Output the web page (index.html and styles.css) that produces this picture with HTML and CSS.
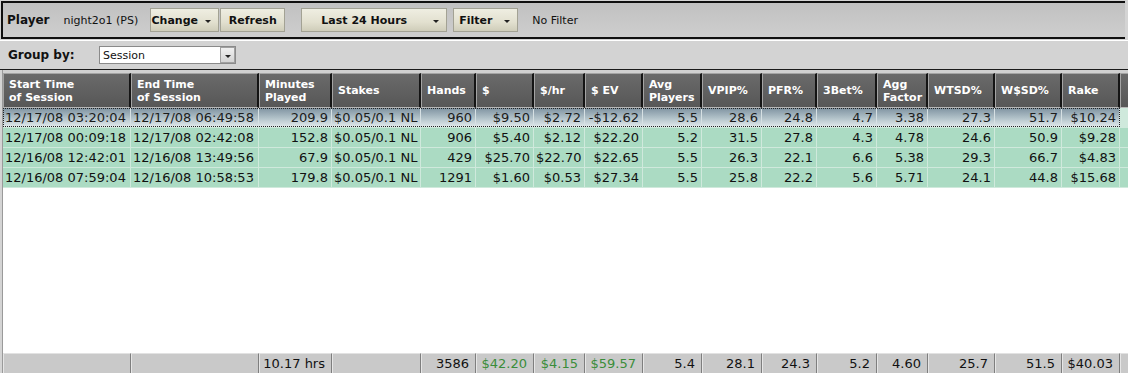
FILE: index.html
```html
<!DOCTYPE html>
<html lang="en">

<head>
    <meta charset="UTF-8" />
    <meta name="viewport" content="width=device-width, initial-scale=1.0" />
    <title>Session Stats</title>
    <link rel="stylesheet" href="styles.css">
</head>

<body>
    <div class="toolbar">
        <span class="player-label">Player</span>
        <span class="player-name">night2o1 (PS)</span>
        <button class="btn btn-change"><span class="btn-label">Change</span><span class="caret-box"><span class="caret"></span></span></button>
        <button class="btn btn-refresh"><span class="btn-label">Refresh</span></button>
        <button class="btn btn-range"><span class="btn-label">Last 24 Hours</span><span class="caret-box"><span class="caret"></span></span></button>
        <button class="btn btn-filter"><span class="btn-label">Filter</span><span class="caret-box"><span class="caret"></span></span></button>
        <span class="filter-text">No Filter</span>
    </div>

    <div class="groupbar">
        <span class="group-label">Group by:</span>
        <div class="select">
            <span class="select-value">Session</span>
            <span class="select-arrow"><span class="caret"></span></span>
        </div>
    </div>

    <div class="grid">
        <div class="grid-head">
            <div class="row">
                <div class="cell">Start Time<br>of Session</div>
                <div class="cell">End Time<br>of Session</div>
                <div class="cell">Minutes<br>Played</div>
                <div class="cell">Stakes</div>
                <div class="cell">Hands</div>
                <div class="cell">$</div>
                <div class="cell">$/hr</div>
                <div class="cell">$ EV</div>
                <div class="cell">Avg<br>Players</div>
                <div class="cell">VPIP%</div>
                <div class="cell">PFR%</div>
                <div class="cell">3Bet%</div>
                <div class="cell">Agg<br>Factor</div>
                <div class="cell">WTSD%</div>
                <div class="cell">W$SD%</div>
                <div class="cell">Rake</div>
                <div class="cell"></div>
            </div>
        </div>

        <div class="grid-body">
            <div class="row selected">
                <div class="cell">12/17/08 03:20:04</div>
                <div class="cell">12/17/08 06:49:58</div>
                <div class="cell num">209.9</div>
                <div class="cell">$0.05/0.1 NL</div>
                <div class="cell num">960</div>
                <div class="cell num">$9.50</div>
                <div class="cell num">$2.72</div>
                <div class="cell num">-$12.62</div>
                <div class="cell num">5.5</div>
                <div class="cell num">28.6</div>
                <div class="cell num">24.8</div>
                <div class="cell num">4.7</div>
                <div class="cell num">3.38</div>
                <div class="cell num">27.3</div>
                <div class="cell num">51.7</div>
                <div class="cell num">$10.24</div>
                <div class="cell extra"></div>
            </div>
            <div class="row">
                <div class="cell">12/17/08 00:09:18</div>
                <div class="cell">12/17/08 02:42:08</div>
                <div class="cell num">152.8</div>
                <div class="cell">$0.05/0.1 NL</div>
                <div class="cell num">906</div>
                <div class="cell num">$5.40</div>
                <div class="cell num">$2.12</div>
                <div class="cell num">$22.20</div>
                <div class="cell num">5.2</div>
                <div class="cell num">31.5</div>
                <div class="cell num">27.8</div>
                <div class="cell num">4.3</div>
                <div class="cell num">4.78</div>
                <div class="cell num">24.6</div>
                <div class="cell num">50.9</div>
                <div class="cell num">$9.28</div>
                <div class="cell extra"></div>
            </div>
            <div class="row">
                <div class="cell">12/16/08 12:42:01</div>
                <div class="cell">12/16/08 13:49:56</div>
                <div class="cell num">67.9</div>
                <div class="cell">$0.05/0.1 NL</div>
                <div class="cell num">429</div>
                <div class="cell num">$25.70</div>
                <div class="cell num">$22.70</div>
                <div class="cell num">$22.65</div>
                <div class="cell num">5.5</div>
                <div class="cell num">26.3</div>
                <div class="cell num">22.1</div>
                <div class="cell num">6.6</div>
                <div class="cell num">5.38</div>
                <div class="cell num">29.3</div>
                <div class="cell num">66.7</div>
                <div class="cell num">$4.83</div>
                <div class="cell extra"></div>
            </div>
            <div class="row">
                <div class="cell">12/16/08 07:59:04</div>
                <div class="cell">12/16/08 10:58:53</div>
                <div class="cell num">179.8</div>
                <div class="cell">$0.05/0.1 NL</div>
                <div class="cell num">1291</div>
                <div class="cell num">$1.60</div>
                <div class="cell num">$0.53</div>
                <div class="cell num">$27.34</div>
                <div class="cell num">5.5</div>
                <div class="cell num">25.8</div>
                <div class="cell num">22.2</div>
                <div class="cell num">5.6</div>
                <div class="cell num">5.71</div>
                <div class="cell num">24.1</div>
                <div class="cell num">44.8</div>
                <div class="cell num">$15.68</div>
                <div class="cell extra"></div>
            </div>
        </div>

        <div class="grid-foot">
            <div class="row">
                <div class="cell"></div>
                <div class="cell"></div>
                <div class="cell num">10.17 hrs</div>
                <div class="cell"></div>
                <div class="cell num">3586</div>
                <div class="cell num money">$42.20</div>
                <div class="cell num money">$4.15</div>
                <div class="cell num money">$59.57</div>
                <div class="cell num">5.4</div>
                <div class="cell num">28.1</div>
                <div class="cell num">24.3</div>
                <div class="cell num">5.2</div>
                <div class="cell num">4.60</div>
                <div class="cell num">25.7</div>
                <div class="cell num">51.5</div>
                <div class="cell num">$40.03</div>
                <div class="cell"></div>
            </div>
        </div>
    </div>
</body>

</html>
```

FILE: styles.css
```css
body {
    margin: 0;
    font-family: "DejaVu Sans", Verdana, sans-serif;
    background-color: #d4d4d4;
    color: #111;
    width: 1128px;
    height: 373px;
    overflow: hidden;
}

/* top toolbar */
.toolbar {
    display: flex;
    align-items: center;
    box-sizing: border-box;
    height: 38px;
    margin: 1px 3px 0 1px;
    padding-left: 4px;
    border: 2px solid #101010;
    border-right: none;
    background: linear-gradient(#c1c1c1, #cecece);
}

.player-label {
    font-size: 12px;
    font-weight: bold;
}

.player-name {
    font-size: 11px;
    margin-left: 14px;
}

.btn {
    display: flex;
    align-items: center;
    box-sizing: border-box;
    height: 24px;
    padding: 0;
    border: 1px solid #a3a294;
    background: linear-gradient(#efeee2, #e2e0cf 60%, #cfcdb9);
    font-family: inherit;
    font-size: 11px;
    font-weight: bold;
    color: #111;
}

.btn-label {
    flex: 1;
    text-align: center;
}

.caret-box {
    width: 20px;
    display: flex;
    justify-content: center;
}

.caret {
    width: 0;
    height: 0;
    border-left: 3px solid transparent;
    border-right: 3px solid transparent;
    border-top: 3px solid #222;
    margin-top: 2px;
}

.btn-change {
    width: 69px;
    margin-left: 12px;
}

.btn-refresh {
    width: 65px;
    margin-left: 1px;
}

.btn-range {
    width: 146px;
    margin-left: 16px;
}

.btn-filter {
    width: 65px;
    margin-left: 6px;
}

.filter-text {
    font-size: 11px;
    margin-left: 14px;
}

/* group by bar */
.groupbar {
    display: flex;
    align-items: center;
    box-sizing: border-box;
    height: 30px;
    margin-top: 1px;
    padding-left: 8px;
    border-top: 1px solid #fff;
    border-bottom: 1px solid #1a1a1a;
    background-color: #d3d3d3;
}

.group-label {
    width: 91px;
    font-size: 12px;
    font-weight: bold;
}

.select {
    display: flex;
    align-items: center;
    box-sizing: border-box;
    width: 137px;
    height: 18px;
    border: 1px solid #8a8a8a;
    background-color: #fff;
}

.select-value {
    flex: 1;
    font-size: 11px;
    padding-left: 3px;
}

.select-arrow {
    display: flex;
    align-items: center;
    justify-content: center;
    box-sizing: border-box;
    width: 15px;
    height: 16px;
    border: 1px solid #a0a0a0;
    background: linear-gradient(#f0f0f0, #d4d4d4);
}

/* data grid */
.grid {
    display: flex;
    flex-direction: column;
    height: 303px;
    margin-left: 2px;
    border-left: 1px solid #9a9a9a;
    overflow: hidden;
}

.row {
    display: grid;
    grid-template-columns: 128px 128px 73px 89px 55px 58px 51px 58px 59px 60px 55px 60px 51px 67px 67px 58px 60px;
}

.cell {
    box-sizing: border-box;
    white-space: nowrap;
    overflow: hidden;
}

.grid-head {
    padding-top: 3px;
    background-color: #d0d0d0;
}

.grid-head .cell {
    display: flex;
    align-items: center;
    height: 35px;
    padding: 0 5px;
    border-top: 1px solid #a4a4a4;
    border-left: 1px solid #a4a4a4;
    border-right: 2px solid #141414;
    border-bottom: 1px solid #b8b8b8;
    background: linear-gradient(#6a6a6a, #575757);
    color: #fff;
    font-size: 11px;
    font-weight: bold;
    line-height: 13px;
}

.grid-body {
    flex: 1;
    background-color: #fff;
}

.grid-body .row {
    height: 20px;
}

.grid-body .cell {
    height: 20px;
    padding: 0 3px 0 2px;
    border-right: 1px solid #cfe9dc;
    border-bottom: 1px solid #cfe9dc;
    background-color: #abdbc3;
    font-size: 13px;
    line-height: 19px;
}

.num {
    text-align: right;
}

.row.selected {
    position: relative;
}

.row.selected .cell {
    background: linear-gradient(#7f93a1, #b3c3ca 55%, #e2eaec);
    border-right-color: #d6e0e3;
    color: #1c1c1c;
}

.row.selected .cell.extra {
    background: #cfe9dc;
}

.row.selected::after {
    content: "";
    position: absolute;
    left: 0;
    top: 0;
    width: 1117px;
    height: 19px;
    box-sizing: border-box;
    border: 1px dotted #222;
}

.grid-foot .cell {
    height: 20px;
    padding: 0 6px 0 3px;
    border-top: 1px solid #e2e2e2;
    border-left: 1px solid #e6e6e6;
    border-right: 1px solid #7e7e7e;
    background-color: #c9c9c9;
    font-size: 13px;
    line-height: 19px;
}

.money {
    color: #3a8d3a;
}
```
